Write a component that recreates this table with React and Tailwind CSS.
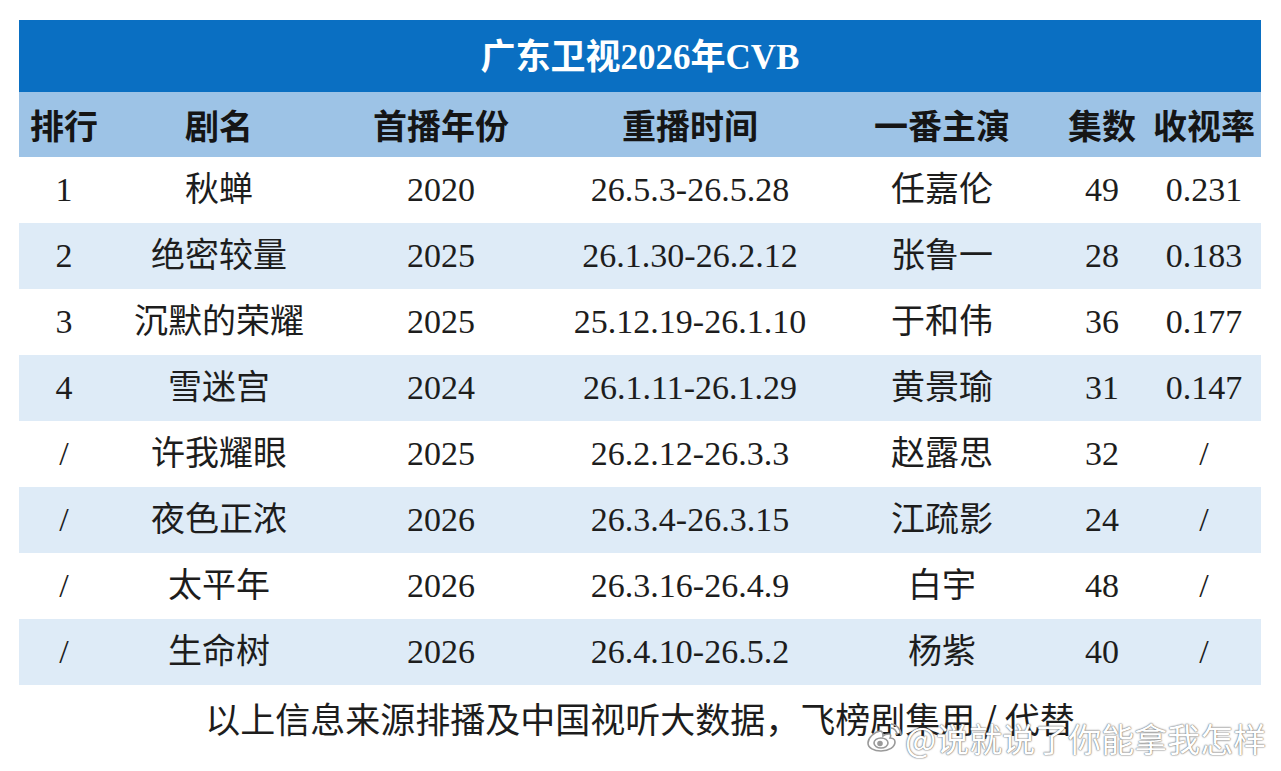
import React from 'react';

// 表头与数据
const headers = ['排行', '剧名', '首播年份', '重播时间', '一番主演', '集数', '收视率'];

const rows = [
  ['1', '秋蝉', '2020', '26.5.3-26.5.28', '任嘉伦', '49', '0.231'],
  ['2', '绝密较量', '2025', '26.1.30-26.2.12', '张鲁一', '28', '0.183'],
  ['3', '沉默的荣耀', '2025', '25.12.19-26.1.10', '于和伟', '36', '0.177'],
  ['4', '雪迷宫', '2024', '26.1.11-26.1.29', '黄景瑜', '31', '0.147'],
  ['/', '许我耀眼', '2025', '26.2.12-26.3.3', '赵露思', '32', '/'],
  ['/', '夜色正浓', '2026', '26.3.4-26.3.15', '江疏影', '24', '/'],
  ['/', '太平年', '2026', '26.3.16-26.4.9', '白宇', '48', '/'],
  ['/', '生命树', '2026', '26.4.10-26.5.2', '杨紫', '40', '/'],
];

const cols = 'grid grid-cols-[90px_220px_224px_274px_230px_90px_114px]';

const WeiboLogo = () => (
  <svg width="36" height="30" viewBox="0 0 36 30" fill="none">
    <g stroke="#9a9a9a" strokeWidth="1.6" fill="#ffffff">
      <path d="M14 8c-6 1-12 7-12 12 0 5 6 8 13 8 8 0 14-4 14-9 0-3-3-4-5-4 1-2 1-4-1-4-2 0-5 1-6 2 0-3-1-5-3-5z" />
      <ellipse cx="15" cy="20" rx="7" ry="5" />
      <circle cx="14" cy="20.5" r="2" fill="#9a9a9a" />
      <path d="M25 5c3 0 6 3 6 7" fill="none" />
      <path d="M25 1c5 0 10 5 10 11" fill="none" />
    </g>
  </svg>
);

const App = () => {
  return (
    <div
      className="relative w-[1281px] h-[771px] bg-white overflow-hidden pt-[20px] pl-[19px]"
      style={{ fontFamily: '"Liberation Serif", "Noto Sans CJK SC", serif' }}
    >
      {/* 表格 */}
      <div className="w-[1242px]">
        <div className="h-[72px] bg-[#0a6fc2] flex items-center justify-center pt-[2px] text-white font-bold text-[35px] leading-none">
          广东卫视2026年CVB
        </div>

        <div
          className={`${cols} h-[65px] bg-[#9dc3e6] text-[#151515] font-bold text-[34px]`}
          style={{ fontFamily: '"Noto Sans CJK SC", sans-serif' }}
        >
          {headers.map((h) => (
            <div key={h} className="flex items-center justify-center leading-none">
              {h}
            </div>
          ))}
        </div>

        {rows.map((row, i) => (
          <div
            key={i}
            className={`${cols} h-[66px] text-[34px] text-[#1d1d1d] ${i % 2 === 1 ? 'bg-[#deebf7]' : 'bg-white'}`}
          >
            {row.map((cell, j) => (
              <div key={j} className="flex items-center justify-center leading-none">
                {cell}
              </div>
            ))}
          </div>
        ))}
      </div>

      {/* 注释 */}
      <div
        className="w-[1242px] mt-[15px] text-center text-[35px] leading-[35px] text-[#1d1d1d]"
        style={{ fontFamily: '"Noto Sans CJK SC", sans-serif' }}
      >
        以上信息来源排播及中国视听大数据，飞榜剧集用 / 代替
      </div>

      {/* 水印 */}
      <div
        className="absolute left-[866px] top-[720px] flex items-center gap-[3px] text-white text-[33px] leading-[36px] [text-shadow:0_0_2px_#666,0_0_1px_#666]"
        style={{ fontFamily: '"Noto Sans CJK SC", sans-serif' }}
      >
        <WeiboLogo />
        <span>@说就说了你能拿我怎样</span>
      </div>
    </div>
  );
};

export default App;
